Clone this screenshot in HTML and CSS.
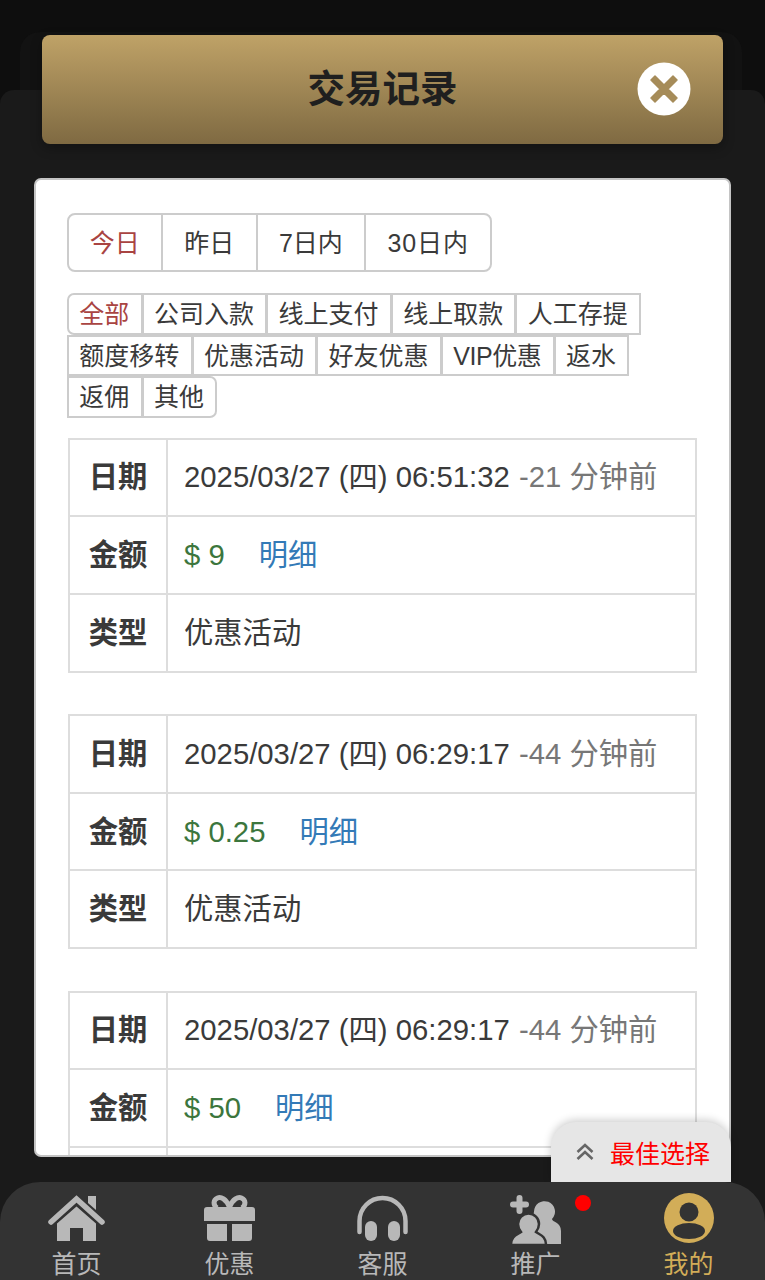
FILE: index.html
```html
<!DOCTYPE html>
<html lang="zh">
<head>
<meta charset="utf-8">
<title>交易记录</title>
<link rel="stylesheet" href="styles.css">
</head>
<body>
<div class="layer-back"></div>
<div class="layer-front"></div>
<div class="app">
  <header class="header">
    <h1 class="title">交易记录</h1>
    <button class="close" aria-label="关闭">
      <svg viewBox="0 0 54 54" width="54" height="54"><circle cx="27" cy="27" r="26.500" fill="#fff"/><path d="M18 14 27 23 36 14 40 18 31 27 40 36 36 40 27 31 18 40 14 36 23 27 14 18Z" fill="#a68c59" stroke="#a68c59" stroke-width="1.500" stroke-linejoin="round"/></svg>
    </button>
  </header>
  <main class="card">
    <div class="tabs">
      <a class="tab active">今日</a><a class="tab">昨日</a><a class="tab">7日内</a><a class="tab tab-wide">30日内</a>
    </div>
    <div class="filters">
      <a class="chip active">全部</a><a class="chip">公司入款</a><a class="chip">线上支付</a><a class="chip">线上取款</a><a class="chip">人工存提</a><a class="chip">额度移转</a><a class="chip">优惠活动</a><a class="chip">好友优惠</a><a class="chip chip-vip">VIP优惠</a><a class="chip">返水</a><a class="chip">返佣</a><a class="chip last">其他</a>
    </div>
    <table class="record">
      <tr><th>日期</th><td>2025/03/27 (四) 06:51:32 <span class="ago">-21 分钟前</span></td></tr>
      <tr><th>金额</th><td><span class="money">$ 9</span><a class="detail">明细</a></td></tr>
      <tr><th>类型</th><td>优惠活动</td></tr>
    </table>
    <table class="record">
      <tr><th>日期</th><td>2025/03/27 (四) 06:29:17 <span class="ago">-44 分钟前</span></td></tr>
      <tr><th>金额</th><td><span class="money">$ 0.25</span><a class="detail">明细</a></td></tr>
      <tr><th>类型</th><td>优惠活动</td></tr>
    </table>
    <table class="record">
      <tr><th>日期</th><td>2025/03/27 (四) 06:29:17 <span class="ago">-44 分钟前</span></td></tr>
      <tr><th>金额</th><td><span class="money">$ 50</span><a class="detail">明细</a></td></tr>
      <tr><th>类型</th><td>优惠活动</td></tr>
    </table>
  </main>
  <a class="best">
    <svg class="best-icon" viewBox="0 0 20 20" width="20" height="20"><path d="M2.500 10 10 3 17.500 10M2.500 17 10 10 17.500 17" fill="none" stroke="#666" stroke-width="2.600"/></svg>
    <span>最佳选择</span>
  </a>
  <nav class="nav">
    <a class="nav-item">
      <svg class="nav-icon" viewBox="0 0 57 46" width="57" height="46"><path d="M3 27 28.500 4 54 27" fill="none" stroke="#b8b8b8" stroke-width="5.500" stroke-linecap="round" stroke-linejoin="miter"/><path d="M40 1H48V15L40 8Z" fill="#b8b8b8"/><path d="M28.500 11.500 48 28.500V46H35V33H22V46H9V28.500Z" fill="#b8b8b8"/></svg>
      <span>首页</span>
    </a>
    <a class="nav-item">
      <svg class="nav-icon" viewBox="0 0 51 46" width="51" height="46"><path d="M25.500 12C22 4 17 1.500 13.500 3 9 5 9 10 13 13M25.500 12C29 4 34 1.500 37.500 3 42 5 42 10 38 13" fill="none" stroke="#b8b8b8" stroke-width="5"/><path d="M3 12H48A3 3 0 0 1 51 15V26H0V15A3 3 0 0 1 3 12ZM3 29H23V46H6A3 3 0 0 1 3 43ZM28 29H48V43A3 3 0 0 1 45 46H28Z" fill="#b8b8b8"/></svg>
      <span>优惠</span>
    </a>
    <a class="nav-item">
      <svg class="nav-icon" viewBox="0 0 51 46" width="51" height="46"><path d="M2.500 37V26A23 23 0 0 1 48.500 26V37" fill="none" stroke="#b8b8b8" stroke-width="4.500" stroke-linecap="round"/><rect x="8" y="26" width="12" height="20" rx="6" fill="#b8b8b8"/><rect x="31" y="26" width="12" height="20" rx="6" fill="#b8b8b8"/></svg>
      <span>客服</span>
    </a>
    <a class="nav-item">
      <svg class="nav-icon" viewBox="0 0 51 49" width="51" height="49"><path d="M9.500 3V16M3 9.500H16" stroke="#b8b8b8" stroke-width="6" stroke-linecap="round"/><path d="M24 17A10.500 10.500 0 1 1 42 24C42 27 51 27 51 36V49H20V30Z" fill="#b8b8b8"/><path d="M18.500 18.500A10.500 10.500 0 0 1 29 29C29 33 27.500 35 26 37 30 40 36 41 36 50H1C1 41 7 40 11 37 9.500 35 8 33 8 29A10.500 10.500 0 0 1 18.500 18.500Z" fill="#b8b8b8" stroke="#333" stroke-width="2.500"/></svg>
      <span>推广</span>
    </a>
    <a class="nav-item current">
      <svg class="nav-icon" viewBox="0 0 50 50" width="50" height="50"><circle cx="25" cy="25" r="25" fill="#d2ad58"/><circle cx="25" cy="19" r="9.500" fill="#333"/><ellipse cx="25" cy="38" rx="16" ry="8" fill="#333"/></svg>
      <span>我的</span>
    </a>
    <span class="dot"></span>
  </nav>
</div>
</body>
</html>
```
FILE: styles.css
```css
* { box-sizing: border-box; }
html, body { margin: 0; height: 1280px; overflow: hidden; }
body {
  position: relative;
  background: #0e0e0e;
  font-family: "Liberation Sans", "Noto Sans CJK SC", sans-serif;
  color: #3a3a3a;
}
.layer-back {
  position: absolute; left: 20px; right: 23px; top: 32px; height: 200px;
  background: #121212; border-radius: 20px;
}
.layer-front {
  position: absolute; left: 0; right: 0; top: 90px; bottom: 0;
  background: #1a1a1a; border-radius: 14px 14px 0 0;
}
.app { position: relative; height: 1280px; display: flex; flex-direction: column; }
.header {
  position: relative;
  flex: none;
  height: 109px;
  margin: 35px 42px 0;
  display: flex; align-items: center; justify-content: center;
  border-radius: 8px;
  background: linear-gradient(#bfa267, #7f6a42);
  box-shadow: 0 4px 12px rgba(0,0,0,.3);
}
.title { margin: 0; font-size: 37.500px; font-weight: 700; color: #1f1f1f; line-height: 1; }
.close {
  position: absolute; right: 32px; top: 27px;
  width: 54px; height: 54px; padding: 0; border: 0; background: none; display: block;
}
.close svg { display: block; }
.card {
  flex: none;
  height: 979px;
  margin: 34px 34px 0;
  padding: 33px 31px 0;
  background: #fff;
  border: 2px solid #c4c4c4;
  border-radius: 7px;
  overflow: hidden;
}
.tabs {
  display: inline-flex;
  height: 59px;
  border: 2px solid #ccc;
  border-radius: 8px;
  vertical-align: top;
  font-size: 25px;
}
.tab {
  display: flex; align-items: center;
  padding: 0 21.300px 3px;
  border-left: 2px solid #ccc;
}
.tab:first-child { border-left: 0; padding-left: 20.700px; }
.tab-wide { letter-spacing: .900px; }
.tab.active, .chip.active { color: #a94442; }
.filters { margin-top: 21px; display: flex; flex-wrap: wrap; width: 636px; font-size: 25px; }
.chip {
  height: 41.500px;
  padding: 0 11.300px 0 10.300px;
  line-height: 38px;
  border: 2px solid #ccc;
  margin-left: -1px;
  background: #fff;
}
.chip-vip { letter-spacing: -.400px; }
.chip.active { margin-left: 0; border-radius: 7px 0 0 7px; }
.chip.last { border-radius: 0 7px 7px 0; }
.chip:nth-child(6), .chip:nth-child(11) { margin-left: 0; }
.record {
  width: 628.500px;
  margin: 0 0 41.500px 1px;
  border-collapse: collapse;
  font-size: 29.300px;
  table-layout: fixed;
}
.filters + .record { margin-top: 20px; }
.record th, .record td {
  height: 77.700px;
  border: 2px solid #ddd;
  padding: 0 16px 6px;
  font-weight: 400;
  text-align: left;
  white-space: nowrap;
}
.record th { width: 98px; padding: 0 0 6px; text-align: center; font-weight: 700; }
.ago { color: #777; margin-left: 1px; }
.money { color: #3c763d; }
.detail { color: #337ab7; margin-left: 34px; }
.best {
  position: absolute; left: 551px; top: 1122px;
  width: 180px; height: 60px;
  display: flex; align-items: center;
  padding-left: 24px; gap: 15px;
  background: #e6e6e6;
  border-radius: 25px 25px 0 0;
  box-shadow: 0 -2px 8px rgba(0,0,0,.2);
  color: #f00; font-size: 25px;
}
.best-icon { flex: none; }
.nav {
  position: absolute; left: 0; right: 0; bottom: 0; height: 98px;
  display: flex;
  background: #333;
  border-radius: 40px 40px 0 0;
  color: #b8b8b8;
  font-size: 25px;
}
.nav-item {
  flex: 1;
  height: 98px;
  padding-top: 13px;
  position: relative;
  text-align: center;
}
.nav-item span {
  position: absolute; left: 0; right: 0; top: 66px; line-height: 32px;
}
.nav-icon { display: block; margin: 0 auto; }
.nav-item.current { color: #d2ad58; }
.current .nav-icon { margin-top: -2px; }
.dot {
  position: absolute; left: 575px; top: 13px;
  width: 16px; height: 16px; border-radius: 50%; background: #f00;
}
```
